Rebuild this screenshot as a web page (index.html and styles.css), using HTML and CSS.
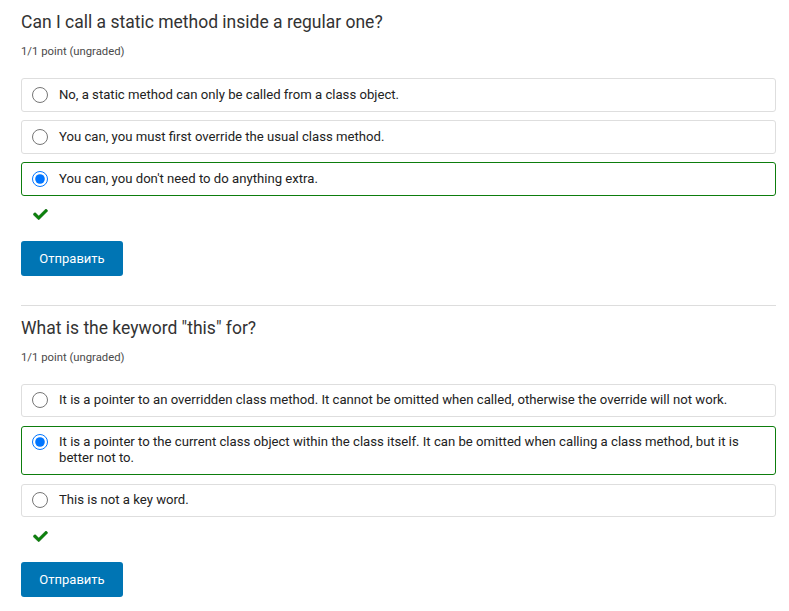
FILE: index.html
```html
<!DOCTYPE html>
<html lang="en">
<head>
<meta charset="utf-8">
<title>Problems</title>
<link rel="stylesheet" href="styles.css">
</head>
<body>
<div class="page">
  <section class="problem">
    <h3 class="title">Can I call a static method inside a regular one?</h3>
    <div class="points">1/1 point (ungraded)</div>
    <div class="options">
      <label class="option"><input type="radio" name="q1"><span>No, a static method can only be called from a class object.</span></label>
      <label class="option"><input type="radio" name="q1"><span>You can, you must first override the usual class method.</span></label>
      <label class="option correct"><input type="radio" name="q1" checked><span>You can, you don't need to do anything extra.</span></label>
    </div>
    <div class="status"><svg class="check" viewBox="0 0 512 390" width="15" height="11"><path d="M173.9 375.4L7.5 209c-10-10-10-26.2 0-36.2l36.2-36.2c10-10 26.2-10 36.2 0L192 248.7 432.1 8.6c10-10 26.2-10 36.2 0l36.2 36.2c10 10 10 26.2 0 36.2L210.1 375.4c-10 10-26.2 10-36.2 0z"/></svg></div>
    <button class="submit" type="button">Отправить</button>
  </section>
  <hr class="divider">
  <section class="problem">
    <h3 class="title">What is the keyword "this" for?</h3>
    <div class="points">1/1 point (ungraded)</div>
    <div class="options">
      <label class="option"><input type="radio" name="q2"><span>It is a pointer to an overridden class method. It cannot be omitted when called, otherwise the override will not work.</span></label>
      <label class="option correct"><input type="radio" name="q2" checked><span>It is a pointer to the current class object within the class itself. It can be omitted when calling a class method, but it is better not to.</span></label>
      <label class="option"><input type="radio" name="q2"><span>This is not a key word.</span></label>
    </div>
    <div class="status"><svg class="check" viewBox="0 0 512 390" width="15" height="11"><path d="M173.9 375.4L7.5 209c-10-10-10-26.2 0-36.2l36.2-36.2c10-10 26.2-10 36.2 0L192 248.7 432.1 8.6c10-10 26.2-10 36.2 0l36.2 36.2c10 10 10 26.2 0 36.2L210.1 375.4c-10 10-26.2 10-36.2 0z"/></svg></div>
    <button class="submit" type="button">Отправить</button>
  </section>
</div>
</body>
</html>
```
FILE: styles.css
```css
html, body {
  margin: 0;
  padding: 0;
  background: #fff;
}
body {
  font-family: Roboto, "Open Sans", sans-serif;
  color: #313131;
}
.page {
  padding: 0 13px 0 21px;
}
.problem {
  padding-top: 11px;
}
.title {
  margin: 0;
  font-size: 17.5px;
  line-height: 22px;
  font-weight: 400;
  color: #333;
}
.points {
  margin-top: 12px;
  font-size: 11.3px;
  line-height: 14px;
  color: #4a4a4a;
}
.options {
  margin-top: 19px;
  display: flex;
  flex-direction: column;
  gap: 8.5px;
}
.option {
  display: flex;
  align-items: flex-start;
  gap: 11px;
  border: 1px solid #dedede;
  border-radius: 3px;
  padding: 7.75px 30px 7.75px 10px;
  font-size: 13.15px;
  line-height: 16px;
  color: #222;
}
.option.correct {
  border-color: #0d7d0d;
}
.option input {
  margin: 0;
  width: 16px;
  height: 16px;
  flex: none;
}
.status {
  margin-top: 13px;
  padding-left: 12px;
  height: 12px;
  display: flex;
  align-items: center;
}
.check {
  display: block;
  fill: #0b820b;
  stroke: #115511;
  stroke-width: 14px;
}
.submit {
  margin-top: 20px;
  display: block;
  width: 102px;
  height: 35px;
  border: none;
  border-radius: 3px;
  background: #0075b4;
  color: #fff;
  font-family: Roboto, "Open Sans", sans-serif;
  font-size: 13px;
  padding: 0;
}
.divider {
  margin: 29px 0 0;
  border: none;
  border-top: 1px solid #dddddd;
  height: 0;
}
```
